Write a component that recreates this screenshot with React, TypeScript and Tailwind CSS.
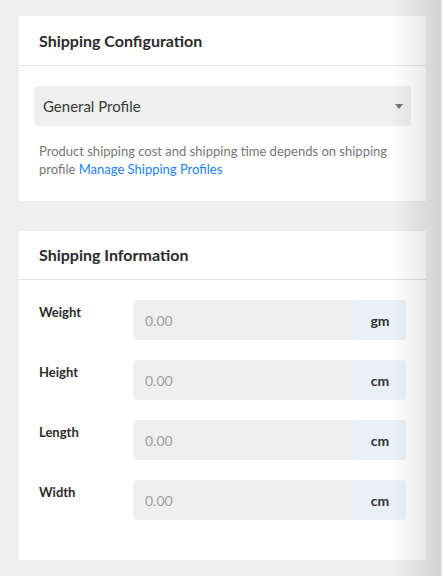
import React from "react";

const rows = [
	{ label: "Weight", unit: "gm" },
	{ label: "Height", unit: "cm" },
	{ label: "Length", unit: "cm" },
	{ label: "Width", unit: "cm" },
];

export default function App() {
	return (
		<div
			className="relative min-h-[576px] w-full overflow-hidden bg-[#efefef] pt-[16px] pl-[19px] pr-[17px] text-[#333]"
			style={{ fontFamily: '"Lato", "Liberation Sans", sans-serif' }}
		>
			<div className="flex w-[407px] flex-col gap-[30px] pb-[16px]">
				<section className="bg-white">
					<div className="flex h-[50px] items-center border-b border-[#e2e2e2] px-[20px]">
						<h2 className="text-[16px] font-bold text-[#2b2b2b]">Shipping Configuration</h2>
					</div>
					<div className="px-[15px] pt-[20px] pb-[23px]">
						<div className="flex h-[40px] items-center justify-between rounded-[4px] bg-[#efefef] pl-[9px] pr-[8px]">
							<span className="text-[15px] text-[#3a3a3a]">General Profile</span>
							<span className="h-0 w-0 border-x-[4px] border-t-[5px] border-x-transparent border-t-[#777]" />
						</div>
						<p className="mt-[16px] px-[5px] text-[13px] leading-[18px] text-[#777]">
							Product shipping cost and shipping time depends on shipping profile{" "}
							<a href="#" className="text-[#1a82f7]">
								Manage Shipping Profiles
							</a>
						</p>
					</div>
				</section>

				<section className="bg-white">
					<div className="flex h-[49px] items-center border-b border-[#e2e2e2] px-[20px]">
						<h2 className="text-[16px] font-bold text-[#2b2b2b]">Shipping Information</h2>
					</div>
					<div className="flex flex-col gap-[20px] px-[20px] pt-[20px] pb-[40px]">
						{rows.map((row) => (
							<div key={row.label} className="flex items-start">
								<label className="w-[94px] pt-[3px] text-[13px] font-bold text-[#2b2b2b]">{row.label}</label>
								<div className="flex h-[40px] flex-1">
									<input
										className="h-full min-w-0 flex-1 rounded-l-[4px] bg-[#efefef] px-[12px] text-[14px] text-[#333] outline-none placeholder:text-[#a0a0a0]"
										placeholder="0.00"
									/>
									<span className="flex w-[52px] items-center justify-center rounded-r-[4px] bg-[#eaf1fb] text-[14px] font-bold text-[#333]">
										{row.unit}
									</span>
								</div>
							</div>
						))}
					</div>
				</section>
			</div>

			<div className="pointer-events-none absolute top-0 right-[2px] bottom-0 w-[50px] bg-gradient-to-r from-transparent to-black/[.12]" />
			<div className="pointer-events-none absolute top-0 right-0 bottom-0 w-[2px] bg-[#efefef]" />
		</div>
	);
}
